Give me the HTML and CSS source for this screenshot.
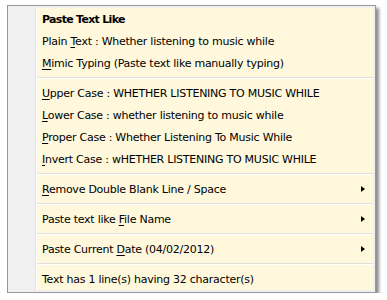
FILE: index.html
```html
<!doctype html>
<html>
<head>
<meta charset="utf-8">
<title>Paste Text Like</title>
<link rel="stylesheet" href="styles.css">
</head>
<body>
<div class="menu">
	<div class="gutter"></div>
	<div class="list">
		<div class="item head">Paste Text Like</div>
		<div class="item">Plain <u>T</u>ext : Whether listening to music while</div>
		<div class="item"><u>M</u>imic Typing (Paste text like manually typing)</div>
		<div class="sep"></div>
		<div class="item"><u>U</u>pper Case : WHETHER LISTENING TO MUSIC WHILE</div>
		<div class="item"><u>L</u>ower Case : whether listening to music while</div>
		<div class="item"><u>P</u>roper Case : Whether Listening To Music While</div>
		<div class="item"><u>I</u>nvert Case : wHETHER LISTENING TO MUSIC WHILE</div>
		<div class="sep"></div>
		<div class="item sub"><u>R</u>emove Double Blank Line / Space</div>
		<div class="sep"></div>
		<div class="item sub">Paste text like <u>F</u>ile Name</div>
		<div class="sep"></div>
		<div class="item sub">Paste Current <u>D</u>ate (04/02/2012)</div>
		<div class="sep"></div>
		<div class="item">Text has 1 line(s) having 32 character(s)</div>
	</div>
</div>
</body>
</html>
```
FILE: styles.css
```css
body {
	margin: 0;
	background: #fff;
	font-family: "DejaVu Sans", sans-serif;
	font-size: 11px;
	letter-spacing: -0.25px;
	color: #000;
}
.menu {
	display: flex;
	width: 363px;
	height: 282px;
	margin: 5px 0 0 7px;
	padding: 2px;
	border: 1px solid #979797;
	background: #f0f0f0;
	box-shadow: 3px 3px 3px rgba(0, 0, 0, 0.45);
}
.gutter {
	width: 25px;
	border-right: 1px solid #e2e3e3;
	box-shadow: 1px 0 0 #fff;
}
.list {
	flex: 1;
	margin-left: 1px;
	background: #fff8dc;
}
.item {
	position: relative;
	height: 22px;
	line-height: 23px;
	padding-left: 5px;
	white-space: nowrap;
}
.item u {
	text-decoration-thickness: 1px;
	text-underline-offset: 2px;
}
.head {
	font-weight: bold;
	letter-spacing: -0.7px;
}
.sub::after {
	content: "";
	position: absolute;
	right: 8px;
	top: 8px;
	border-left: 4px solid #000;
	border-top: 3.5px solid transparent;
	border-bottom: 3.5px solid transparent;
}
.sep {
	height: 2px;
	margin: 3px 0;
	border-top: 1px solid #e0e0e0;
	background: #fff;
	box-sizing: border-box;
}
```
